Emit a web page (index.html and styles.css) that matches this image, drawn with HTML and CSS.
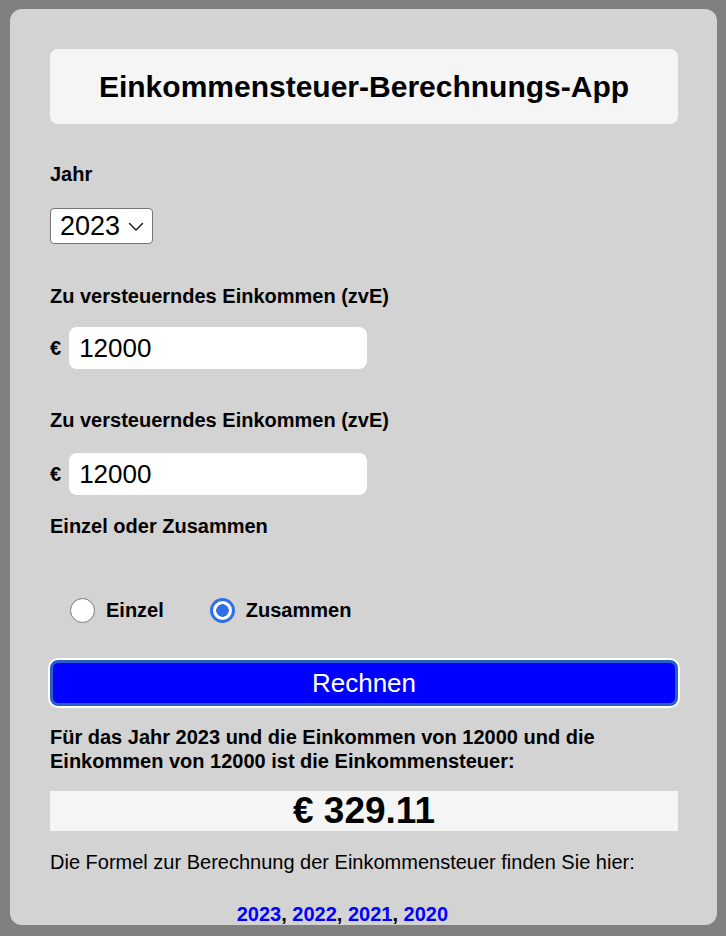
FILE: index.html
```html
<!DOCTYPE html>
<html lang="de">
<head>
<meta charset="utf-8">
<title>Einkommensteuer-Berechnungs-App</title>
<link rel="stylesheet" href="styles.css">
</head>
<body>
<main class="panel">
  <h1 class="title">Einkommensteuer-Berechnungs-App</h1>

  <label class="field-label label-year" for="year">Jahr</label>
  <div class="select-wrap">
    <select id="year" class="year-select">
      <option>2023</option>
      <option>2022</option>
      <option>2021</option>
      <option>2020</option>
    </select>
    <svg class="chevron" width="16" height="10" viewBox="0 0 16 10" aria-hidden="true"><path d="M1.5 1.5 L8 8 L14.5 1.5" fill="none" stroke="#111" stroke-width="1.4" stroke-linecap="round" stroke-linejoin="round"/></svg>
  </div>

  <label class="field-label label-income1" for="inc1">Zu versteuerndes Einkommen (zvE)</label>
  <div class="money-row row1">
    <span class="euro">€</span>
    <input id="inc1" class="money-input" type="text" value="12000">
  </div>

  <label class="field-label label-income2" for="inc2">Zu versteuerndes Einkommen (zvE)</label>
  <div class="money-row row2">
    <span class="euro">€</span>
    <input id="inc2" class="money-input" type="text" value="12000">
  </div>

  <div class="field-label label-mode">Einzel oder Zusammen</div>
  <div class="radio-row">
    <label class="radio-item"><input type="radio" name="mode" class="radio"> <span>Einzel</span></label>
    <label class="radio-item"><input type="radio" name="mode" class="radio" checked> <span>Zusammen</span></label>
  </div>

  <button class="calc-btn" type="button">Rechnen</button>

  <p class="result-text">Für das Jahr 2023 und die Einkommen von 12000 und die Einkommen von 12000 ist die Einkommensteuer:</p>

  <div class="result-box">€ 329.11</div>

  <div class="footer">
    <p class="footer-text">Die Formel zur Berechnung der Einkommensteuer finden Sie hier:</p>
    <p class="footer-links"><a href="#">2023</a>, <a href="#">2022</a>, <a href="#">2021</a>, <a href="#">2020</a></p>
  </div>
</main>
</body>
</html>
```

FILE: styles.css
```css
html, body {
  margin: 0;
  padding: 0;
}

body {
  background: #808080;
  font-family: "Liberation Sans", Arial, Helvetica, sans-serif;
  color: #000;
  height: 936px;
  overflow: hidden;
}

.panel {
  display: flex;
  flex-direction: column;
  align-items: flex-start;
  margin: 9px 9px 0 10px;
  padding: 40px 39px 0 40px;
  height: 876px;
  background: #d3d3d3;
  border-radius: 12px;
}

.title {
  align-self: stretch;
  margin: 0;
  height: 75px;
  display: flex;
  align-items: center;
  justify-content: center;
  background: #f5f5f5;
  border-radius: 8px;
  font-size: 30px;
  font-weight: bold;
}

.field-label {
  display: block;
  font-size: 20px;
  font-weight: bold;
  line-height: 23px;
}

.label-year { margin-top: 39px; }
.label-income1 { margin-top: 41px; }
.label-income2 { margin-top: 40px; }
.label-mode { margin-top: 20px; }

.select-wrap {
  position: relative;
  margin-top: 22px;
  width: 103px;
  height: 36px;
}

.year-select {
  appearance: none;
  -webkit-appearance: none;
  width: 103px;
  height: 36px;
  box-sizing: border-box;
  border: 1px solid #767676;
  border-radius: 4px;
  background: #fff;
  font-family: "Liberation Sans", Arial, sans-serif;
  font-size: 27px;
  padding: 0 0 0 9px;
  color: #000;
}

.chevron {
  position: absolute;
  right: 9px;
  top: 14px;
  pointer-events: none;
}

.money-row {
  display: flex;
  align-items: center;
  gap: 8px;
}

.row1 { margin-top: 19px; }
.row2 { margin-top: 21px; }

.euro {
  font-size: 20px;
  font-weight: bold;
}

.money-input {
  width: 298px;
  height: 42px;
  box-sizing: border-box;
  border: none;
  border-radius: 8px;
  background: #fff;
  padding: 0 10px;
  font-family: "Liberation Sans", Arial, sans-serif;
  font-size: 26px;
  color: #000;
  outline: none;
}

.radio-row {
  display: flex;
  align-items: center;
  gap: 46px;
  margin-top: 60px;
  padding-left: 20px;
}

.radio-item {
  display: flex;
  align-items: center;
  gap: 11px;
  font-size: 20px;
  font-weight: bold;
  line-height: 23px;
}

.radio {
  appearance: none;
  -webkit-appearance: none;
  margin: 0;
  width: 25px;
  height: 25px;
  box-sizing: border-box;
  border-radius: 50%;
  border: 1.5px solid #7a7a7a;
  background: #fff;
}

.radio:checked {
  border: 3px solid #2f6fec;
  background: radial-gradient(circle, #2f6fec 0 6px, #fff 6.5px);
}

.calc-btn {
  align-self: stretch;
  margin-top: 37px;
  height: 46px;
  border: 3px solid #2a5fc8;
  border-radius: 8px;
  background: #0000ff;
  color: #fff;
  font-family: "Liberation Sans", Arial, sans-serif;
  font-size: 26px;
  line-height: 30px;
  padding: 0;
  box-shadow: 0 0 0 2px #fff;
}

.result-text {
  margin: 19px 0 0;
  font-size: 20px;
  font-weight: bold;
  line-height: 24px;
}

.result-box {
  align-self: stretch;
  margin-top: 18px;
  height: 40px;
  display: flex;
  align-items: center;
  justify-content: center;
  background: #f5f5f5;
  font-size: 37px;
  font-weight: bold;
}

.footer {
  margin-top: 20px;
  text-align: center;
}

.footer-text {
  margin: 0;
  font-size: 20px;
  line-height: 22px;
}

.footer-links {
  margin: 30px 0 0;
  font-size: 20px;
  font-weight: bold;
  line-height: 22px;
}

.footer-links a {
  color: #0000ff;
  text-decoration: none;
}
```
